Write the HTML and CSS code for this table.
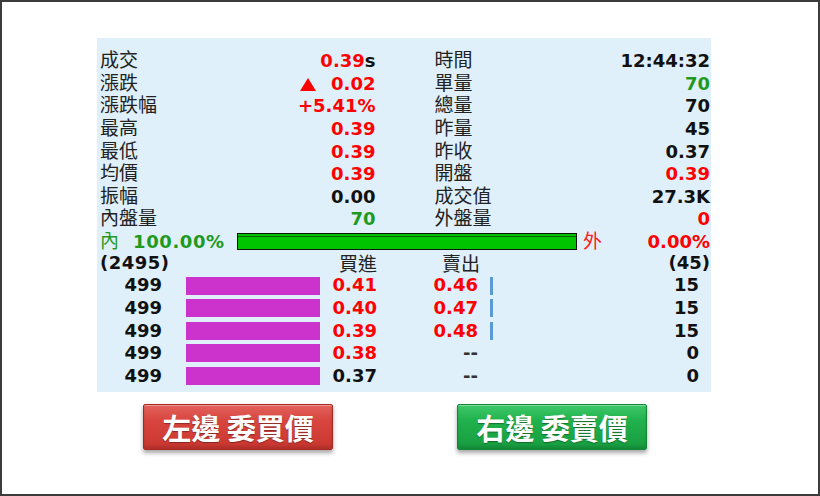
FILE: index.html
```html
<!DOCTYPE html>
<html lang="zh-Hant">
<head>
<meta charset="utf-8">
<title>報價</title>
<link rel="stylesheet" href="styles.css">
</head>
<body>
<div class="frame">
  <div class="content">
    <div class="panel">
      <div class="stats">
        <div class="stat"><span class="lbl">成交</span><span class="val"><span class="up">0.39</span>s</span></div>
        <div class="stat"><span class="lbl">時間</span><span class="val">12:44:32</span></div>
        <div class="stat"><span class="lbl">漲跌</span><span class="val up"><svg class="tri" width="16" height="13" viewBox="0 0 16 13"><polygon points="8,0 16,13 0,13" fill="#ff0000"/></svg>0.02</span></div>
        <div class="stat"><span class="lbl">單量</span><span class="val dn">70</span></div>
        <div class="stat"><span class="lbl">漲跌幅</span><span class="val up">+5.41%</span></div>
        <div class="stat"><span class="lbl">總量</span><span class="val">70</span></div>
        <div class="stat"><span class="lbl">最高</span><span class="val up">0.39</span></div>
        <div class="stat"><span class="lbl">昨量</span><span class="val">45</span></div>
        <div class="stat"><span class="lbl">最低</span><span class="val up">0.39</span></div>
        <div class="stat"><span class="lbl">昨收</span><span class="val">0.37</span></div>
        <div class="stat"><span class="lbl">均價</span><span class="val up">0.39</span></div>
        <div class="stat"><span class="lbl">開盤</span><span class="val up">0.39</span></div>
        <div class="stat"><span class="lbl">振幅</span><span class="val">0.00</span></div>
        <div class="stat"><span class="lbl">成交值</span><span class="val">27.3K</span></div>
        <div class="stat"><span class="lbl">內盤量</span><span class="val dn">70</span></div>
        <div class="stat"><span class="lbl">外盤量</span><span class="val up">0</span></div>
      </div>
      <div class="ratio">
        <div class="ratio-in"><span class="lbl dn">內</span><span class="val dn pct">100.00%</span></div>
        <div class="ratio-bar"></div>
        <div class="ratio-out"><span class="lbl up">外</span><span class="val up">0.00%</span></div>
      </div>
      <div class="book">
        <div class="book-head">
          <span class="val tot-bid">(2495)</span>
          <span class="lbl bid-h">買進</span>
          <span class="lbl ask-h">賣出</span>
          <span class="val tot-ask">(45)</span>
        </div>
        <div class="book-row">
          <span class="val qty">499</span><span></span><span class="bidbar"></span><span class="val px up">0.41</span><span class="val px up">0.46</span><span class="askcell"><span class="askbar"></span></span><span class="val aqty">15</span>
        </div>
        <div class="book-row">
          <span class="val qty">499</span><span></span><span class="bidbar"></span><span class="val px up">0.40</span><span class="val px up">0.47</span><span class="askcell"><span class="askbar"></span></span><span class="val aqty">15</span>
        </div>
        <div class="book-row">
          <span class="val qty">499</span><span></span><span class="bidbar"></span><span class="val px up">0.39</span><span class="val px up">0.48</span><span class="askcell"><span class="askbar"></span></span><span class="val aqty">15</span>
        </div>
        <div class="book-row">
          <span class="val qty">499</span><span></span><span class="bidbar"></span><span class="val px up">0.38</span><span class="val px dash">--</span><span class="askcell"></span><span class="val aqty">0</span>
        </div>
        <div class="book-row">
          <span class="val qty">499</span><span></span><span class="bidbar"></span><span class="val px">0.37</span><span class="val px dash">--</span><span class="askcell"></span><span class="val aqty">0</span>
        </div>
      </div>
    </div>
    <div class="buttons">
      <div class="btn btn-red">左邊 委買價</div>
      <div class="btn btn-green">右邊 委賣價</div>
    </div>
  </div>
</div>
</body>
</html>
```
FILE: styles.css
```css
* { box-sizing: border-box; }
html, body { margin: 0; padding: 0; background: #fff; }
.frame {
  width: 820px;
  height: 496px;
  border: 2px solid #3c3c3c;
  background: #fff;
}
.content {
  padding: 36px 0 0 95px;
}
.panel {
  width: 614px;
  height: 354px;
  background: #dff0fa;
  padding: 10px 1px 0 3px;
}
.lbl {
  font-family: "Noto Sans CJK TC", sans-serif;
  font-size: 19px;
  font-weight: 400;
  color: #222;
  line-height: 22.64px;
}
.val {
  font-family: "DejaVu Sans", Verdana, sans-serif;
  font-size: 18px;
  font-weight: 700;
  color: #111;
  line-height: 22.64px;
  white-space: nowrap;
}
.up { color: #ff0000; }
.dn { color: #1f9a1f; }
.lbl.up { color: #ff2020; }
.lbl.dn { color: #1f9a1f; }

.stats {
  display: grid;
  grid-template-columns: 1fr 1fr;
  column-gap: 59px;
  grid-auto-rows: 22.64px;
}
.stat {
  display: flex;
  justify-content: space-between;
  align-items: baseline;
  height: 22.64px;
}
.tri {
  margin-right: 15px;
  vertical-align: -1px;
}

.ratio {
  display: grid;
  grid-template-columns: 137px 340px 1fr;
  height: 22.64px;
  align-items: center;
}
.ratio-in, .ratio-out {
  display: flex;
  align-items: baseline;
}
.pct { margin-left: 14px; letter-spacing: 0.6px; }
.ratio-out {
  justify-content: space-between;
  padding-left: 6px;
}
.ratio-bar {
  height: 17px;
  border: 1px solid #111;
  background: linear-gradient(to bottom, #00c400 0 2px, #0b5e0b 2px 3px, #00c400 3px 100%);
}

.book-head, .book-row {
  display: grid;
  grid-template-columns: 62px 24px 134px 57px 101px 1fr 60px;
  height: 22.64px;
  align-items: center;
}
.tot-bid { grid-column: 1 / 4; letter-spacing: 0.5px; }
.bid-h { grid-column: 4; text-align: right; }
.ask-h { grid-column: 5; text-align: right; margin-right: -2px; }
.tot-ask { grid-column: 6 / 8; text-align: right; }
.qty, .px { text-align: right; }
.aqty { text-align: right; padding-right: 11px; }
.bidbar {
  height: 18px;
  background: #cc33cc;
}
.askcell {
  display: flex;
  align-items: center;
  padding-left: 12px;
  height: 18px;
}
.askbar {
  width: 3px;
  height: 18px;
  background: #5b9bd5;
}
.dash { color: #333; }

.buttons {
  display: flex;
  gap: 124px;
  margin: 12px 0 0 46px;
}
.btn {
  width: 190px;
  height: 46px;
  display: flex;
  align-items: center;
  justify-content: center;
  color: #fff;
  font-family: "Noto Sans CJK TC", sans-serif;
  font-weight: 700;
  font-size: 29px;
  border-radius: 2px;
  text-shadow: 0 1px 1px rgba(0,0,0,.35);
  box-shadow: 0 3px 4px rgba(0,0,0,.35), inset 0 1px 0 rgba(255,255,255,.35), inset 0 -3px 3px rgba(0,0,0,.12);
}
.btn-red {
  background: linear-gradient(#e3625d, #d8463f 35%, #c8362f);
  border: 1px solid #a8281f;
}
.btn-green {
  background: linear-gradient(#40c86a, #20b24c 35%, #179c40);
  border: 1px solid #12893a;
}
```
